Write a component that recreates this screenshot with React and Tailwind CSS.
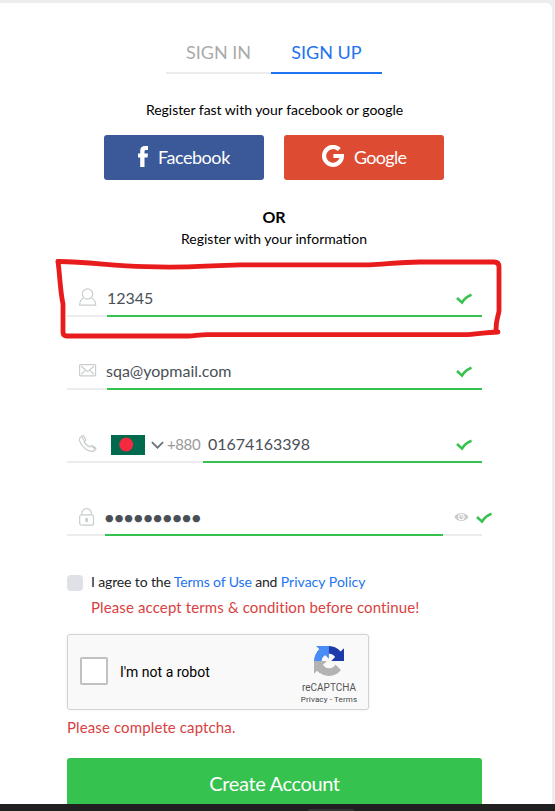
import React from "react";

const Check = ({ className = "" }) => (
  <svg className={`mt-[2px] shrink-0 ${className}`} width="16" height="12" viewBox="0 0 16 12" fill="none">
    <path d="M1 5L6 9.6Q9.5 4 15.5 1.8" stroke="#35c24f" strokeWidth="2.6" />
  </svg>
);

const UserIcon = () => (
  <svg width="18" height="18" viewBox="0 0 18 18" fill="none" stroke="#c9cdcd" strokeWidth="1.2">
    <circle cx="8.5" cy="6" r="5.2" />
    <path d="M4.9 10C1.900 10.900.7 13.200.6 17.200H16.700C16.600 13.200 15.300 10.900 12.100 10" />
  </svg>
);

const MailIcon = () => (
  <svg className="mt-px" width="18" height="18" viewBox="0 0 18 18" fill="none" stroke="#c9cdcd" strokeWidth="1.2">
    <rect x="0.6" y="2.6" width="16" height="11.2" rx="1" />
    <path d="M2.300 4.200L7.300 8.700Q8.600 9.700 9.900 8.700L14.900 4.200M2.300 12.200L6 8.600M14.900 12.200L11.200 8.600" />
  </svg>
);

const PhoneIcon = () => (
  <svg className="mt-px" width="18" height="18" viewBox="0 0 18 18" fill="none" stroke="#c9cdcd" strokeWidth="1.2" strokeLinejoin="round">
    <path d="M1 2.6L3.2.8Q4 .4 4.6 1.1L6.5 4.1Q6.9 4.9 6.2 5.5L5.1 6.4C6 8.6 8.3 10.9 11 12L11.9 11Q12.5 10.4 13.3 10.8L16.5 12.7Q17.2 13.3 16.6 14L15 15.9C12 17.4 7.3 15.2 4.1 11.6C1.2 8.3-.2 4.7 1 2.6ZM2.5 1.5L5.1 5.5M12.8 11.6L16.1 13.7" />
  </svg>
);

const LockIcon = () => (
  <svg className="mt-px" width="18" height="18" viewBox="0 0 18 18" fill="none" stroke="#c9cdcd" strokeWidth="1.2">
    <rect x="0.7" y="6.8" width="13.8" height="10.4" rx="2" />
    <path d="M2.8 6.8V5.4A4.8 4.8 0 0 1 12.4 5.4V6.8" />
    <rect x="6.2" y="10" width="2.8" height="4" rx="0.8" fill="#c9cdcd" stroke="none" />
  </svg>
);

const EyeIcon = () => (
  <svg className="shrink-0" width="15" height="10" viewBox="0 0 15 10">
    <path d="M.3 5C3.6-.4 11.200-.4 14.500 5C11.200 10.400 3.600 10.400.3 5Z" fill="#c8cacc" />
    <circle cx="7.4" cy="5" r="2.7" fill="none" stroke="#fff" strokeWidth="1.1" />
    <path d="M7.4 3.2V5H9.2" fill="none" stroke="#fff" strokeWidth="0.8" />
  </svg>
);

const Flag = () => (
  <svg className="shrink-0" width="34" height="20" viewBox="0 0 34 20">
    <rect width="34" height="20" fill="#006a4e" />
    <circle cx="15.2" cy="9.6" r="7" fill="#f42a41" />
  </svg>
);

const CaptchaLogo = () => (
  <svg width="30" height="30" viewBox="0 0 64 64">
    <path d="M64 31.955l-.033-1.37V4.687l-7.16 7.16C50.948 4.674 42.033.093 32.05.093c-10.4 0-19.622 4.96-25.458 12.64l11.736 11.86a15.55 15.55 0 0 1 4.754-5.334c2.05-1.6 4.952-2.906 8.968-2.906.485 0 .86.057 1.135.163 4.976.393 9.288 3.14 11.828 7.124l-8.307 8.307L64 31.953" fill="#1c3aa9" />
    <path d="M31.862.094l-1.37.033H4.594l7.16 7.16C4.58 13.147 0 22.06 0 32.046c0 10.4 4.96 19.622 12.64 25.458L24.5 45.768a15.55 15.55 0 0 1-5.334-4.754c-1.6-2.05-2.906-4.952-2.906-8.968 0-.485.057-.86.163-1.135.393-4.976 3.14-9.288 7.124-11.828l8.307 8.307L31.86.095" fill="#4a8cf5" />
    <path d="M.001 32.045l.033 1.37v25.898l7.16-7.16c5.86 7.173 14.774 11.754 24.76 11.754 10.4 0 19.622-4.96 25.458-12.64l-11.736-11.86a15.55 15.55 0 0 1-4.754 5.334c-2.05 1.6-4.952 2.906-8.968 2.906-.485 0-.86-.057-1.135-.163-4.976-.393-9.288-3.14-11.828-7.124l8.307-8.307c-10.522.04-22.4.066-27.295-.005" fill="#b3b3b3" />
  </svg>
);

const IconCell = ({ children, className }) => (
  <div className={`flex shrink-0 border-b-2 border-[#ececec] pt-[7px] pl-3 ${className}`}>{children}</div>
);

export default function App() {
  return (
    <div className="relative flex h-[811px] w-[555px] flex-col overflow-hidden bg-[#ecedee] pt-[3px] font-['Lato',sans-serif] text-black">
      <main className="flex h-[801px] w-[552px] shrink-0 flex-col overflow-hidden rounded-tr-md bg-white pl-[67px]">
        <nav className="mt-[31px] ml-[99px] flex h-10 shrink-0 text-[18px] leading-[37px]">
          <div className="w-[105px] border-b-2 border-[#ececec] text-center text-[#a9abac]">SIGN IN</div>
          <div className="w-[111px] border-b-2 border-[#2273f0] text-center text-[#2273f0]">SIGN UP</div>
        </nav>
        <p className="mt-[26px] h-5 w-[415px] shrink-0 text-center text-[14px] leading-5 tracking-[-0.03px]">Register fast with your facebook or google</p>
        <div className="mt-[15px] ml-[37px] flex h-[45px] shrink-0 gap-5 text-[18px] text-white">
          <button className="flex w-40 items-center rounded-[3px] bg-[#3b5998] pl-[34px]">
            <svg width="10" height="21" viewBox="0 0 10 21" className="mb-[2px]">
              <path d="M2.2 21V11.4H0V7.4H2.2V4.8C2.2 1.5 3.9 0 6.9 0H10V4H8.1C6.9 4 6.5 4.5 6.5 5.6V7.4H10L9.5 11.4H6.5V21Z" fill="#fff" />
            </svg>
            <span className="ml-[10px] tracking-[-0.45px]">Facebook</span>
          </button>
          <button className="flex w-40 items-center rounded-[3px] bg-[#dd4b33] pl-[38px]">
            <svg width="22" height="22" viewBox="0 0 22 22" fill="none" stroke="#fff" strokeWidth="4.2" className="mb-[3px]">
              <path d="M17.3 4.6A8.9 8.9 0 1 0 19.9 11H11.4" />
            </svg>
            <span className="ml-[10px] tracking-[-0.7px]">Google</span>
          </button>
        </div>
        <p className="mt-[27px] h-5 w-[414px] shrink-0 text-center text-[16px] leading-5 font-bold">OR</p>
        <p className="mt-[2px] h-5 w-[414px] shrink-0 text-center text-[14px] leading-5">Register with your information</p>

        <section className="mt-[32px] flex w-[425px] shrink-0 flex-col gap-[37px] text-[16px] leading-[32px] text-[#495057]">
          <div className="flex h-9">
            <IconCell className="w-10"><UserIcon /></IconCell>
            <div className="flex w-[375px] items-center justify-between border-b-2 border-[#35c24f] pr-[10px]">
              <span>12345</span>
              <Check />
            </div>
          </div>
          <div className="flex h-9">
            <IconCell className="w-10"><MailIcon /></IconCell>
            <div className="flex w-[375px] items-center justify-between border-b-2 border-[#35c24f] pr-[10px]">
              <span className="-ml-px">sqa@yopmail.com</span>
              <Check />
            </div>
          </div>
          <div className="flex h-9">
            <IconCell className="w-[136px]">
              <PhoneIcon />
              <div className="mt-px ml-[14px] flex h-5 items-center">
                <Flag />
                <svg className="ml-[6px] shrink-0" width="13" height="9" viewBox="0 0 13 9" fill="none" stroke="#6c757d" strokeWidth="1.9">
                  <path d="M.9 1.1L6.5 6.7L12.1 1.1" />
                </svg>
                <span className="mb-[2px] ml-[3px] text-[15px] tracking-[-0.4px] text-[#999]">+880</span>
              </div>
            </IconCell>
            <div className="flex w-[279px] items-center justify-between border-b-2 border-[#35c24f] pr-[10px] pl-[5px]">
              <span>01674163398</span>
              <Check />
            </div>
          </div>
          <div className="flex h-9">
            <IconCell className="w-[38px]"><LockIcon /></IconCell>
            <div className="w-[338px] border-b-2 border-[#35c24f]">
              <span className="-ml-[1.500px] block text-[20px] leading-[34px] tracking-[-1.93px]">••••••••••</span>
            </div>
            <div className="flex w-[39px] items-center gap-[7px] border-b-2 border-[#ececec] pl-[11px]">
              <EyeIcon />
              <Check />
            </div>
          </div>
        </section>

        <div className="mt-[36px] flex h-5 shrink-0 items-center text-[14px] leading-5 text-[#212529]">
          <span className="mt-[2px] size-4 rounded-[4px] bg-[#dee2e6]" />
          <p className="ml-2 tracking-[-0.14px]">
            I agree to the <a className="text-[#2273f0]">Terms of Use</a> and <a className="tracking-[0.02px] text-[#2273f0]">Privacy Policy</a>
          </p>
        </div>
        <p className="mt-[5px] ml-6 h-5 shrink-0 text-[15px] leading-5 tracking-[0.12px] text-[#d8413f]">Please accept terms &amp; condition before continue!</p>

        <div className="mt-[17px] flex h-[76px] w-[302px] shrink-0 rounded-[3px] border border-[#d3d3d3] bg-[#f9f9f9] font-['Roboto',sans-serif] shadow-[0_0_3px_rgba(0,0,0,0.08)]">
          <span className="mt-[22px] ml-3 size-7 rounded-[2px] border-2 border-[#c1c1c1] bg-white" />
          <span className="mt-[27px] ml-3 text-[14px] leading-5">I'm not a robot</span>
          <div className="mt-[11px] mr-[9px] ml-auto flex w-[60px] flex-col items-center text-[#555]">
            <CaptchaLogo />
            <span className="mt-[6px] text-[10px] leading-[11px]">reCAPTCHA</span>
            <span className="mt-[2px] text-[8px] leading-[10px] tracking-[0.13px] whitespace-nowrap text-[#444]">Privacy - Terms</span>
          </div>
        </div>
        <p className="mt-[7px] h-5 shrink-0 text-[15px] leading-5 tracking-[0.12px] text-[#d8413f]">Please complete captcha.</p>
        <button className="mt-[21px] h-[52px] w-[415px] shrink-0 rounded-[3px] bg-[#35c24f] pb-[2px] text-[20px] leading-[50px] tracking-[-0.36px] text-white">Create Account</button>
      </main>
      <footer className="flex h-[7px] shrink-0 items-end bg-[#202020]">
        <span className="ml-[308px] h-[2px] w-[46px] rounded-t-sm bg-[#343434]" />
      </footer>
      <svg className="pointer-events-none absolute top-0 left-0" width="555" height="811" viewBox="0 0 555 811" fill="none" stroke="#e81c1c" strokeWidth="4.8" strokeLinecap="round" strokeLinejoin="round">
        <path d="M58 261.5C90 262 110 265.500 145 266.700C170 267.400 195 266.700 205 266.200L240 264.800H370C385 264.200 400 262 420 262H494Q499 262 499 267V311C498 318 496 319 496 330" />
        <path d="M58 261.500C60 276 60 290 63 304V332Q63 336 67 336H188C195 336 198 334.700 208 334.700H464C476 334.700 484 332.300 498 332" />
      </svg>
    </div>
  );
}
